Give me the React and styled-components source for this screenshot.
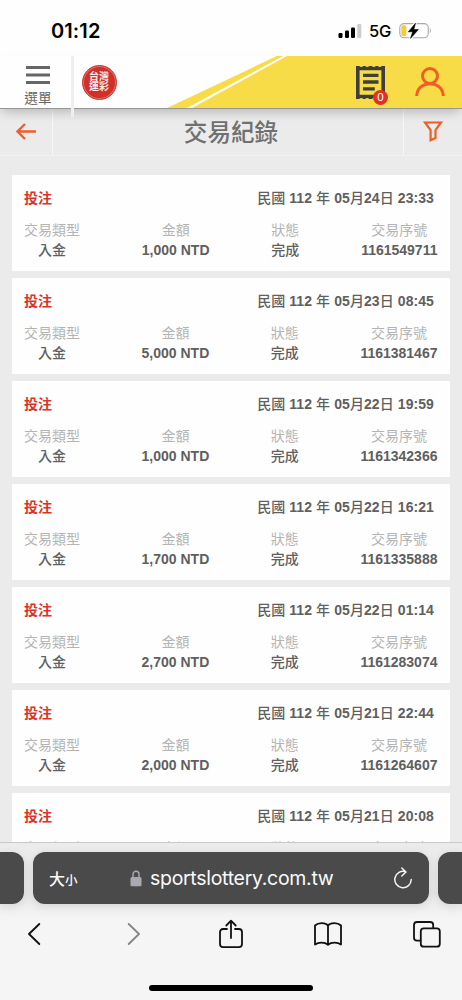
import React from "react";
import styled, { createGlobalStyle } from "styled-components";

const records = [
  { month: "05", day: "24", time: "23:33", amount: "1,000 NTD", serial: "1161549711" },
  { month: "05", day: "23", time: "08:45", amount: "5,000 NTD", serial: "1161381467" },
  { month: "05", day: "22", time: "19:59", amount: "1,000 NTD", serial: "1161342366" },
  { month: "05", day: "22", time: "16:21", amount: "1,700 NTD", serial: "1161335888" },
  { month: "05", day: "22", time: "01:14", amount: "2,700 NTD", serial: "1161283074" },
  { month: "05", day: "21", time: "22:44", amount: "2,000 NTD", serial: "1161264607" },
  { month: "05", day: "21", time: "20:08", amount: "1,000 NTD", serial: "1161258320" },
];

const StatusIcons = () => (
  <StatusRight>
    <svg width="24" height="16" viewBox="0 0 24 16">
      <rect x="0.5" y="10" width="4" height="5" rx="1.2" />
      <rect x="7" y="7.5" width="4" height="7.5" rx="1.2" />
      <rect x="13" y="4.5" width="4" height="10.5" rx="1.2" />
      <rect x="19.3" y="1" width="4" height="14" rx="1.2" fill="#ccc" />
    </svg>
    <Network>5G</Network>
    <svg width="33" height="18" viewBox="0 0 33 18">
      <rect x="0.8" y="1.6" width="28.5" height="14.2" rx="4.2" fill="none" stroke="#aaa" strokeWidth="1.1" />
      <path d="M30.8 6.3c1.4.6 1.4 4.2 0 4.8z" fill="#aaa" />
      <rect x="2.3" y="3.2" width="5" height="11" rx="1.8" fill="#f4cc38" />
      <path d="M16.5 1.2 9.3 9.8h4.4L11.5 16.4 19.4 7.6h-4.6z" stroke="#fff" strokeWidth="2.6" strokeLinejoin="round" />
      <path d="M16.5 1.2 9.3 9.8h4.4L11.5 16.4 19.4 7.6h-4.6z" stroke="#000" strokeWidth="0.6" strokeLinejoin="round" />
    </svg>
  </StatusRight>
);

const Record = ({ record }) => (
  <Card>
    <CardTop>
      <Kind>投注</Kind>
      <DateText>
        <Han>民國</Han> 112 <Han>年</Han> {record.month}
        <Han>月</Han>
        {record.day}
        <Han>日</Han> {record.time}
      </DateText>
    </CardTop>
    <Fields>
      <Field>
        <Label>交易類型</Label>
        <Value>
          <Han>入金</Han>
        </Value>
      </Field>
      <Field>
        <Label>金額</Label>
        <Value>{record.amount}</Value>
      </Field>
      <Field>
        <Label>狀態</Label>
        <Value>
          <Han>完成</Han>
        </Value>
      </Field>
      <Field>
        <Label>交易序號</Label>
        <Value>{record.serial}</Value>
      </Field>
    </Fields>
  </Card>
);

const App = () => {
  return (
    <Phone>
      <GlobalStyle />
      <StatusBar>
        <Time>01:12</Time>
        <StatusIcons />
      </StatusBar>
      <Header>
        <Stripes width="462" height="52" viewBox="0 0 462 52">
          <path d="M277 0H462V52H167z" fill="#f8dc47" />
          <path d="M283 0h4L192 52h-5z" fill="#fff" />
        </Stripes>
        <MenuButton>
          <svg width="24" height="18" viewBox="0 0 24 18">
            <path d="M0 1.5h24M0 9h24M0 16.5h24" stroke="#666" strokeWidth="2.8" />
          </svg>
          選單
        </MenuButton>
        <Divider />
        <Logo>
          <LogoText>
            台灣
            <br />
            運彩
          </LogoText>
        </Logo>
        <HeaderActions>
          <Ticket>
            <svg width="29" height="33" viewBox="0 0 29 33">
              <path
                d="M0 0H3.2a2.4 2.2 0 0 0 4 0h2a2.4 2.2 0 0 0 4 0h2.6a2.4 2.2 0 0 0 4 0h2a2.4 2.2 0 0 0 4 0H29V33H25.8a2.4 2.2 0 0 0-4 0h-2a2.4 2.2 0 0 0-4 0h-2.6a2.4 2.2 0 0 0-4 0h-2a2.4 2.2 0 0 0-4 0H0zM3.600 4.300v24.400H25.400V4.300z"
                fill="#403e38"
                fillRule="evenodd"
              />
              <path d="M7 9.3h15.5M7 16h15.5M7 22.8h11.8" stroke="#403e38" strokeWidth="3.3" />
            </svg>
            <Badge>0</Badge>
          </Ticket>
          <svg width="30" height="30" viewBox="0 0 30 30" fill="none" stroke="#ee5f27" strokeWidth="3">
            <circle cx="15" cy="9" r="7.5" />
            <path d="M1.7 29C2 21 8 16.7 15 16.7S28 21 28.3 29" />
          </svg>
        </HeaderActions>
      </Header>
      <TitleBar>
        <TitleSide>
          <svg width="20" height="17" viewBox="0 0 20 17" fill="none" stroke="#ee5f27" strokeWidth="2.3">
            <path d="M1.5 8.5H20M9 1 1.5 8.5 9 16" />
          </svg>
        </TitleSide>
        <Title>交易紀錄</Title>
        <TitleSide $right>
          <svg width="20" height="21" viewBox="0 0 20 21" fill="none" stroke="#ee5f27" strokeWidth="2.2">
            <path d="M2 1.5H18L12.5 9V17L7.6 19.2V9z" />
          </svg>
        </TitleSide>
      </TitleBar>
      <List>
        {records.map((record) => (
          <Record key={record.serial} record={record} />
        ))}
      </List>
      <Browser>
        <Tabs>
          <SideTab />
          <AddressBar>
            <TextSize>
              大<small>小</small>
            </TextSize>
            <Address>
              <svg width="12" height="17" viewBox="0 0 12 17">
                <path d="M3 8V4.2C3 .2 9 .2 9 4.2V8" fill="none" stroke="#aaa8b0" strokeWidth="1.4" />
                <rect x="0.5" y="7" width="11" height="9.3" rx="1.5" fill="#aaa8b0" />
              </svg>
              <Url>sportslottery.com.tw</Url>
            </Address>
            <svg width="20" height="23" viewBox="0 0 20 23" fill="none" stroke="#f4f4f4" strokeWidth="1.5" strokeLinecap="round" strokeLinejoin="round">
              <path d="M12.7 4.8A8.2 8.2 0 1 0 18.2 12.5M8.8 1 13 5 8.8 9" />
            </svg>
          </AddressBar>
          <SideTab $right />
        </Tabs>
        <Toolbar>
          <svg width="28" height="22" viewBox="-7 0 28 22">
            <path d="M12.3 1 2 11 12.3 21" />
          </svg>
          <svg width="28" height="22" viewBox="-9 0 28 22" stroke="#858585">
            <path d="M1.7 1 12 11 1.7 21" />
          </svg>
          <svg width="28" height="30" viewBox="-3 0 28 30">
            <path d="M8 10H4.2Q1 10 1 13.2V25Q1 28.2 4.2 28.2H19.8Q23 28.2 23 25V13.2Q23 10 19.8 10H16M12 19V2M7.3 6.5 12 1.7 16.7 6.5" />
          </svg>
          <svg width="28" height="24" viewBox="0 0 28 24">
            <path d="M14 3.5C11.5.3 4.3.2 1 3.5V22.5C4.5 20 10.8 20 14 22.7 17.2 20 23.5 20 27 22.5V3.5C23.7.2 16.5.3 14 3.5zV22.7" />
          </svg>
          <svg width="28" height="27" viewBox="0 0 28 27">
            <rect x="7.8" y="7.3" width="19" height="18.4" rx="3" />
            <path d="M7.5 19.7H4Q1 19.7 1 16.7V4Q1 1 4 1H17.2Q20.2 1 20.2 4V7" />
          </svg>
        </Toolbar>
        <HomeIndicator />
      </Browser>
    </Phone>
  );
};

const GlobalStyle = createGlobalStyle`
  * {
    box-sizing: border-box;
  }
  body {
    margin: 0;
    overflow: hidden;
  }
  svg {
    display: block;
    flex-shrink: 0;
  }
`;

const Phone = styled.div`
  display: flex;
  flex-direction: column;
  width: 462px;
  height: 1000px;
  overflow: hidden;
  background: #ebebeb;
  font-family: "Liberation Sans", "Noto Sans CJK TC", sans-serif;
`;

const StatusBar = styled.div`
  display: flex;
  justify-content: space-between;
  align-items: center;
  flex: 0 0 56px;
  padding: 6px 30px 0 51px;
  background: #fefefe;
  font-family: Inter, sans-serif;
`;

const Time = styled.div`
  font-size: 20px;
  font-weight: 600;
  letter-spacing: 0.1px;
`;

const StatusRight = styled.div`
  display: flex;
  align-items: center;
`;

const Network = styled.span`
  width: 37px;
  padding-left: 7px;
  font-size: 16.5px;
  font-weight: 500;
  letter-spacing: -0.3px;
`;

const Header = styled.header`
  position: relative;
  z-index: 1;
  display: flex;
  flex: none;
  height: 52px;
  background: #fefefe;
  box-shadow: 0 1px 0 #969696, 0 6px 10px -2px rgba(0, 0, 0, 0.22);
`;

const Stripes = styled.svg`
  position: absolute;
  inset: 0;
  z-index: -1;
`;

const MenuButton = styled.div`
  display: flex;
  flex-direction: column;
  align-items: center;
  gap: 4px;
  width: 71px;
  padding: 10px 0 0 5px;
  color: #666;
  font-size: 13.7px;
  line-height: 22px;
`;

const Divider = styled.div`
  width: 3px;
  height: 61px;
  background: #efefef;
`;

const Logo = styled.div`
  display: flex;
  align-items: center;
  justify-content: center;
  width: 35px;
  height: 35px;
  margin: 8.5px 0 0 7.5px;
  border: 1px solid #d33d37;
  border-radius: 50%;
  background: #cf302b;
  box-shadow: inset 0 0 0 1px #e0706b;
`;

const LogoText = styled.div`
  color: #fbeceb;
  font-size: 10px;
  font-weight: 700;
  line-height: 10px;
`;

const HeaderActions = styled.div`
  display: flex;
  align-items: flex-start;
  gap: 30px;
  margin-left: auto;
  padding: 10px 17px 0 0;

  > svg {
    margin-top: 1px;
  }
`;

const Ticket = styled.div`
  position: relative;
`;

const Badge = styled.span`
  position: absolute;
  top: 24px;
  left: 17px;
  width: 15px;
  height: 15px;
  border-radius: 50%;
  background: #e03423;
  color: #fff;
  font-size: 11.5px;
  line-height: 15px;
  text-align: center;
`;

const TitleBar = styled.div`
  display: flex;
  flex: none;
  height: 48px;
  border-bottom: 1px solid #f1f1f1;
`;

const TitleSide = styled.div`
  display: flex;
  justify-content: center;
  align-items: center;
  width: ${(props) => (props.$right ? 59 : 53)}px;
  border-${(props) => (props.$right ? "left" : "right")}: 1px solid #f8f8f8;
`;

const Title = styled.h1`
  flex: 1;
  margin: 0;
  padding-left: 6px;
  color: #707070;
  font-size: 23.6px;
  font-weight: 500;
  line-height: 50px;
  text-align: center;
`;

const List = styled.main`
  display: flex;
  flex-direction: column;
  gap: 7px;
  flex: none;
  height: 686px;
  padding: 19.4px 12px 0;
  overflow: hidden;
`;

const Card = styled.section`
  flex: 0 0 96px;
  padding: 12.3px 12.5px 0 12px;
  background: #fefefe;
  color: #5f5f5f;
  font-size: 14px;
`;

const CardTop = styled.div`
  display: flex;
  justify-content: space-between;
  padding-right: 3.5px;
  font-weight: bold;
  line-height: 21px;
`;

const Kind = styled.span`
  color: #dc3328;
`;

const DateText = styled.span`
  white-space: nowrap;
  letter-spacing: 0.08px;
`;

const Han = styled.span`
  font-weight: 500;
`;

const Fields = styled.div`
  display: flex;
  justify-content: space-between;
  margin-top: 11px;
`;

const Field = styled.div`
  display: flex;
  flex-direction: column;
  align-items: center;
  line-height: 20.5px;
`;

const Label = styled.span`
  color: #b4b4b4;
`;

const Value = styled.span`
  font-weight: bold;
`;

const Browser = styled.footer`
  display: flex;
  flex-direction: column;
  flex: 0 0 158px;
  border-top: 1px solid #c9c9c9;
  background: linear-gradient(#ececec 0, #e8e8e8 50px, #f5f5f5 76px);
`;

const Tabs = styled.div`
  display: flex;
  justify-content: space-between;
  height: 52px;
  margin-top: 9px;
`;

const SideTab = styled.div`
  width: 24px;
  border-radius: ${(props) => (props.$right ? "12px 0 0 12px" : "0 12px 12px 0")};
  background: #4a4a4a;
  box-shadow: 0 2px 10px rgba(0, 0, 0, 0.1);
`;

const AddressBar = styled.div`
  display: flex;
  align-items: center;
  width: 396px;
  padding: 0 16px;
  border-radius: 12px;
  background: #4a4a4a;
  box-shadow: 0 2px 10px rgba(0, 0, 0, 0.1);
  color: #fafafa;
`;

const TextSize = styled.span`
  width: 81px;
  font-size: 16px;
  font-weight: 500;

  small {
    font-size: 12.5px;
  }
`;

const Address = styled.div`
  display: flex;
  align-items: center;
  gap: 8px;
  flex: 1;
`;

const Url = styled.span`
  font-family: Inter, sans-serif;
  font-size: 19.5px;
  letter-spacing: -0.3px;
`;

const Toolbar = styled.nav`
  display: flex;
  justify-content: space-between;
  align-items: center;
  height: 60px;
  padding: 0 21.5px 0 20px;

  svg {
    fill: none;
    stroke-width: 1.8;
    stroke-linecap: round;
    stroke-linejoin: round;
  }
  svg:not([stroke]) {
    stroke: #111;
  }
`;

const HomeIndicator = styled.div`
  width: 164px;
  height: 6px;
  margin: 21px 0 0 149px;
  border-radius: 3px;
  background: #000;
`;

export default App;
